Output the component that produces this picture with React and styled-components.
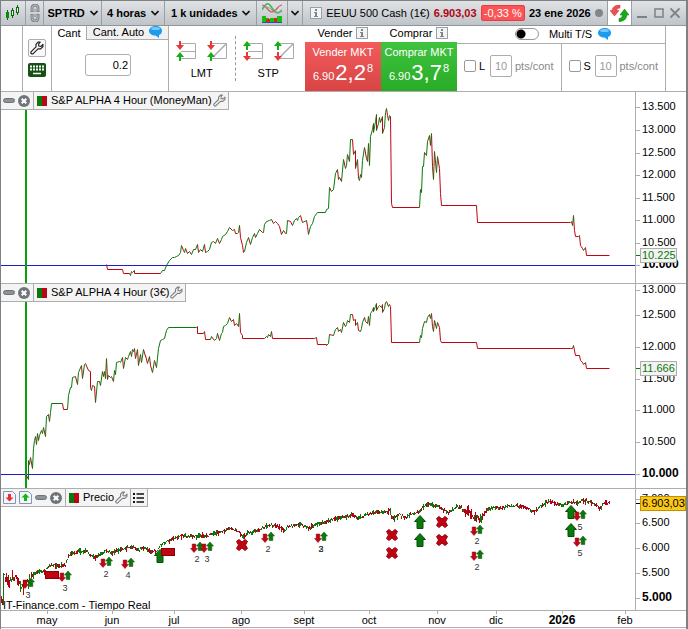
import React from 'react'
import styled, { createGlobalStyle } from 'styled-components'

const UP = '#0a780a'
const DOWN = '#c00412'
const LINE = '#adadad'

// Series are stored as flat x,y lists, three units per pixel.
const MONEYMAN = [
  318,522, 322,538, 368,538, 371,550, 388,550, 391,556, 394,543, 397,548, 402,540, 404,549, 480,549, 488,541, 494,540,
  500,526, 508,510, 516,501, 522,503, 530,500, 536,496, 541,486, 544,467, 549,480, 553,487, 556,475, 562,491, 568,485,
  573,493, 580,477, 586,478, 591,464, 595,488, 602,479, 606,483, 612,464, 616,486, 622,484, 628,478, 634,456, 640,455,
  647,461, 652,446, 657,459, 663,447, 668,438, 675,432, 682,425, 689,412, 696,421, 702,417, 706,430, 712,430, 716,428,
  718,406, 722,443, 726,465, 731,486, 734,484, 738,456, 744,443, 750,463, 756,443, 763,429, 767,443, 773,430, 779,419,
  786,428, 790,426, 794,402, 800,393, 808,392, 814,387, 820,400, 826,394, 832,401, 838,410, 844,432, 850,421, 855,431,
  859,429, 863,391, 870,395, 878,407, 884,391, 888,384, 892,392, 896,381, 902,377, 908,397, 918,390, 922,409, 925,432,
  930,410, 938,401, 944,379, 952,368, 975,367, 979,357, 985,354, 989,293, 994,303, 1001,297, 1006,250, 1012,238,
  1016,268, 1019,261, 1024,274, 1030,208, 1035,235, 1039,225, 1042,192, 1048,215, 1051,149, 1057,149, 1061,193,
  1065,182, 1067,235, 1071,208, 1076,265, 1079,270, 1081,252, 1084,262, 1088,210, 1093,172, 1098,206, 1102,213,
  1105,160, 1108,227, 1112,140, 1116,118, 1119,100, 1121,127, 1125,95, 1129,73, 1130,121, 1134,100, 1138,82, 1142,97,
  1146,80, 1148,130, 1152,112, 1156,67, 1159,55, 1163,75, 1166,92, 1169,77, 1172,80, 1174,340, 1178,352, 1258,352,
  1261,298, 1264,308, 1267,230, 1270,228, 1274,188, 1279,195, 1283,155, 1288,137, 1291,166, 1294,130, 1298,230,
  1300,268, 1304,185, 1308,247, 1312,200, 1317,235, 1321,310, 1325,346, 1430,346, 1432,397, 1710,397, 1715,395,
  1717,405, 1720,376, 1723,420, 1726,439, 1736,439, 1739,436, 1742,466, 1746,474, 1750,481, 1756,472, 1759,496, 1829,496,
]

const THREE_EURO = [
  80,585, 85,598, 86,540, 89,552, 91,532, 97,565, 100,505, 104,480, 107,470, 109,492, 112,461, 115,482, 119,465,
  124,452, 127,460, 130,443, 136,468, 139,410, 145,402, 148,424, 150,396, 155,370, 187,370, 190,388, 203,388, 206,345,
  210,322, 214,322, 217,293, 226,290, 232,312, 236,278, 243,257, 248,295, 253,252, 257,250, 264,270, 271,275, 272,322,
  275,332, 278,315, 283,318, 287,367, 292,305, 297,303, 301,315, 307,275, 311,290, 313,275, 316,295, 318,236, 322,297,
  325,285, 330,292, 335,288, 339,303, 343,270, 347,282, 350,248, 358,243, 362,248, 367,233, 371,265, 376,232, 382,238,
  386,228, 391,215, 393,230, 397,208, 401,213, 404,205, 407,235, 412,207, 415,257, 421,222, 425,247, 430,208, 435,230,
  437,225, 442,250, 447,228, 452,255, 457,277, 462,240, 470,262, 476,205, 482,182, 488,178, 494,175, 500,152, 505,142,
  590,142, 592,138, 593,160, 610,160, 613,153, 616,178, 630,178, 635,170, 643,180, 648,175, 653,160, 658,180, 663,160,
  667,158, 670,140, 676,135, 683,130, 689,112, 695,125, 699,118, 704,135, 710,130, 715,138, 718,100, 722,158, 726,165,
  728,175, 793,175, 798,168, 802,172, 806,163, 812,168, 814,155, 817,175, 942,175, 948,172, 952,193, 978,193, 980,196,
  985,190, 989,163, 1000,165, 1005,148, 1011,142, 1016,153, 1021,148, 1025,157, 1030,127, 1035,140, 1039,133, 1042,122,
  1048,128, 1051,103, 1057,103, 1061,122, 1065,117, 1067,137, 1071,128, 1076,152, 1080,153, 1085,145, 1088,127,
  1093,113, 1097,125, 1102,130, 1105,108, 1108,136, 1112,100, 1116,92, 1119,82, 1121,95, 1125,80, 1129,70, 1130,92,
  1135,80, 1139,77, 1143,82, 1146,73, 1148,97, 1153,85, 1157,67, 1160,65, 1165,78, 1169,73, 1172,78, 1174,187,
  1258,187, 1261,167, 1264,172, 1267,145, 1274,125, 1279,127, 1283,113, 1288,103, 1291,115, 1294,100, 1298,140,
  1300,153, 1304,122, 1308,145, 1312,128, 1317,142, 1322,180, 1325,187, 1430,187, 1432,205, 1710,205, 1717,205,
  1720,196, 1725,225, 1738,227, 1742,240, 1747,248, 1751,252, 1755,248, 1759,265, 1829,265,
]

const PRICE = [
  12,275, 22,285, 28,290, 35,275, 45,275, 55,295, 65,300, 75,300, 85,290, 100,268, 110,262, 120,258, 130,262, 150,240,
  165,243, 185,240, 195,240, 205,212, 215,205, 225,205, 235,198, 245,203, 255,195, 265,205, 275,212, 285,218, 295,210,
  305,205, 315,198, 325,200, 335,205, 345,198, 360,195, 380,188, 400,186, 415,195, 430,190, 445,198, 460,198, 470,200,
  478,182, 490,175, 505,168, 515,162, 530,160, 545,152, 560,155, 575,153, 590,155, 605,152, 615,155, 630,148, 650,143,
  660,142, 685,130, 710,135, 720,145, 728,155, 740,145, 760,140, 780,133, 795,125, 810,120, 830,123, 845,133, 855,135,
  860,125, 880,122, 900,118, 915,125, 925,130, 940,122, 960,115, 980,110, 1000,100, 1020,100, 1035,95, 1055,90,
  1070,100, 1090,92, 1115,83, 1140,80, 1168,80, 1175,100, 1185,92, 1200,90, 1212,100, 1230,88, 1250,83, 1265,70,
  1280,58, 1300,62, 1315,65, 1330,75, 1345,85, 1355,74, 1365,68, 1380,65, 1390,80, 1400,80, 1415,92, 1430,95, 1440,105,
  1450,90, 1460,72, 1480,68, 1500,70, 1520,65, 1540,62, 1560,65, 1580,68, 1600,80, 1620,65, 1640,52, 1655,52, 1670,58,
  1690,60, 1710,52, 1730,52, 1750,46, 1770,50, 1790,65, 1800,70, 1810,55, 1828,55,
]

const MARKERS = [
  ['pair', 85, 293, ['3'], 328], ['box', 155, 271], ['pair', 196, 274, ['3'], 310], ['pair', 319, 232, ['2'], 268],
  ['pair', 385, 235, ['4'], 270], ['buy', 481, 214], ['box', 505, 202], ['pair', 592, 187, ['2'], 222],
  ['pair', 622, 187, ['3'], 222], ['cross', 727, 181], ['pair', 805, 157, ['2'], 193], ['pair', 962, 157, ['2', '3'], 193],
  ['cross', 1177, 149], ['cross', 1177, 203], ['buy', 1261, 112], ['buy', 1261, 166], ['cross', 1325, 111],
  ['cross', 1325, 166], ['pair', 1432, 134, ['2'], 168], ['pair', 1432, 211, ['2'], 246], ['buy', 1714, 82],
  ['buy', 1714, 136], ['pair', 1741, 91, ['5'], 127], ['pair', 1741, 169, ['5'], 205],
]

const MONTHS = [
  ['may', 46], ['jun', 111], ['jul', 173], ['ago', 240], ['sept', 303], ['oct', 368], ['nov', 436], ['dic', 495],
  ['2026', 561, true], ['feb', 624],
]

const PLOT_WIDTH = 634
const pct = (x) => `${(x / PLOT_WIDTH) * 100}%`
const snap = (v) => Math.floor(v / 3) + 0.5

// Splits a series into a rising and a falling path; flat runs keep the last colour.
function splitSeries(data, top) {
  let up = ''
  let down = ''
  let rising = false
  for (let i = 2; i < data.length; i += 2) {
    const x1 = snap(data[i - 2]) - 1
    const y1 = snap(data[i - 1]) - top
    const x2 = snap(data[i]) - 1
    const y2 = snap(data[i + 1]) - top
    if (y2 !== y1) rising = y2 < y1
    const part = `M${x1} ${y1}L${x2} ${y2}`
    if (rising) up += part
    else down += part
  }
  return { up, down }
}

function priceBars(data) {
  let up = 'M2.5 84V116'
  let down = 'M0.5 107V114M1.5 110V116'
  let seed = 7
  const rand = () => {
    seed = (seed * 16807) % 2147483647
    return seed / 2147483647
  }
  let k = 0
  for (let x = 4; x < 610; x++) {
    while (k + 3 < data.length - 2 && data[k + 2] < x * 3) k += 2
    const t = (x * 3 - data[k]) / (data[k + 2] - data[k])
    const y = (data[k + 1] + t * (data[k + 3] - data[k + 1])) / 3 - 4
    const wild = x < 32 ? 3 : (x > 387 && x < 405) || (x > 455 && x < 486) ? 2 : 1
    const h = 1 + Math.floor(rand() * rand() * 5 * wild + rand() * 2)
    const y1 = Math.round(y - h / 2 + (rand() - 0.5) * wild * 2)
    const part = `M${x - 0.5} ${y1}v${h}`
    const slope = data[k + 3] - data[k + 1]
    if (rand() < (slope < 0 ? 0.65 : 0.35)) up += part
    else down += part
  }
  return { up, down }
}

function Wrench({ size = 14, color = '#7c8084' }) {
  return (
    <svg width={size} height={size} viewBox="0 0 14 14" fill="none" stroke={color} strokeWidth="1.2" strokeLinejoin="round">
      <path d="M8 1.2 6 3.4v2.5L1.2 10.6q-.8 1 .1 1.9t1.9.1L8 7.9h2.6l2.3-2.2V3.4L11 5.3 8.7 5V2.9L10.2 1.2z" />
    </svg>
  )
}

function InfoIcon() {
  return (
    <svg width="12" height="12" viewBox="0 0 12 12">
      <rect x="0.5" y="0.5" width="11" height="11" fill="#f4f4f4" stroke="#9aa0a4" />
      <path d="M5 2h2v2H5zM4 5h3v4h1v1H4V9h1V6H4z" fill="#80868c" />
    </svg>
  )
}

function Bubble() {
  return (
    <svg width="13" height="12" viewBox="0 0 13 12">
      <path d="M6.5 0C10.300 0 13 2 13 4.800S11.500 8.600 10 9V12L6.500 9.500C2.800 9.300 0 7.600 0 4.900S2.800 0 6.500 0z" fill="#1c9cf0" />
      <ellipse cx="6.5" cy="2.5" rx="4.5" ry="1.6" fill="#7cc8fa" />
    </svg>
  )
}

function Chevron() {
  return (
    <svg width="8" height="6" viewBox="0 0 8 6" fill="none" stroke="#111" strokeWidth="1.6">
      <path d="M.5 1 4 4.500 7.500 1" />
    </svg>
  )
}

function CandlesIcon() {
  return (
    <svg width="14" height="16" viewBox="0 0 14 16">
      <path d="M1.5 5v10M6.5 3v10M11.5 0v10" stroke="#0a6a0a" />
      <rect x="0" y="7" width="3" height="6" fill="#0a8a0a" />
      <rect x="5.5" y="5.5" width="2" height="5" fill="#dfe" stroke="#0a6a0a" />
      <rect x="10.5" y="2.5" width="2" height="5" fill="#dfe" stroke="#0a6a0a" />
    </svg>
  )
}

function LinkIcon() {
  return (
    <svg width="10" height="18" viewBox="0 0 10 18" fill="none">
      <path d="M2 8V4a3 3 0 0 1 6 0v4M2 10v4a3 3 0 0 0 6 0v-4" stroke="#7f858a" strokeWidth="3" />
      <path d="M2 7V4a3 3 0 0 1 6 0v3M2 11v3a3 3 0 0 0 6 0v-3" stroke="#b4b9bd" />
      <path d="M5 5v3M5 10v3" stroke="#7f858a" />
    </svg>
  )
}

function IndicatorIcon() {
  return (
    <svg width="20" height="20" viewBox="0 0 20 20" fill="none">
      <path d="M0 7C5-2 7 0 10 5s6 7 10 2" stroke="#3cb84c" strokeWidth="1.5" />
      <path d="M0 2c4 0 6 7 10 7s6-7 10-7" stroke="#d05858" strokeWidth="1.2" />
      <path d="M0 5c4-2 6-1 10 2s7 3 10 1" stroke="#8a9a90" />
      <path d="M0 19V13h4v2h3v4zM8 19v-4h4v4zM15 19v-6h5v6z" fill="#12c012" />
      <path d="M4 19v-3h4v3zM12 19v-4h3v4z" fill="#e02020" />
      <path d="M0 19.5h20" stroke="#2050c0" />
    </svg>
  )
}

function RefreshIcon() {
  return (
    <svg width="19" height="17" viewBox="0 0 19 17">
      <path d="M10 0C5 0 2.500 2 2.200 5.500H0L4.500 11 9 5.500H6.500C6.800 4 8 3 10 3z" fill="#ee5050" stroke="#c83030" strokeWidth="0.5" />
      <path d="M9 16.500c5 0 7.500-2.500 7.800-6.500H19L14.500 4 10 10h2.500c-.3 2-1.500 3.300-3.500 3.500z" fill="#18a818" stroke="#0a780a" strokeWidth="0.5" />
    </svg>
  )
}

// Arrow pair in front of either a level line or a slanted one.
function OrderIcon({ slanted, upFirst }) {
  const head = (y, up, color) =>
    up ? <path d={`M0 ${y + 5}l4-5 4 5H5v4H3v-4z`} fill={color} /> : <path d={`M0 ${y + 4}l4 5 4-5H5v-4H3v4z`} fill={color} />
  return (
    <svg width="20" height="20" viewBox="0 0 20 20" fill="none">
      <path d="M5 2.5H19.5V17.5H5" stroke="#aaa" />
      <path d={slanted ? 'M6 16 19 3' : 'M5 10.5H19'} stroke="#aaa" strokeWidth={slanted ? 1.5 : 1} />
      {upFirst ? head(0, true, '#14b014') : head(0, false, '#e83838')}
      {upFirst ? head(11, false, '#e83838') : head(11, true, '#14b014')}
    </svg>
  )
}

function KeyboardIcon() {
  return (
    <svg width="18" height="14" viewBox="0 0 18 14">
      <rect width="18" height="14" rx="2" fill="#145214" />
      <path d="M2 3.5h14M2 6.5h14" stroke="#fff" strokeWidth="2" strokeDasharray="2 1" />
      <path d="M5 10.5h8" stroke="#fff" strokeWidth="1.5" />
    </svg>
  )
}

function MinusIcon() {
  return (
    <svg width="12" height="5" viewBox="0 0 12 5">
      <rect x="0.5" y="0.5" width="11" height="4" rx="2" fill="#8d9296" stroke="#6c7276" />
    </svg>
  )
}

function CloseIcon() {
  return (
    <svg width="12" height="12" viewBox="0 0 12 12">
      <circle cx="6" cy="6" r="6" fill="#6f7579" />
      <path d="M3.7 3.7l4.6 4.6M8.3 3.7 3.7 8.3" stroke="#fff" strokeWidth="2" />
    </svg>
  )
}

function PaneArrowIcon({ up }) {
  return (
    <svg width="13" height="13" viewBox="0 0 13 13">
      <path d="M.5.5h9l3 3v9H.5z" fill="#f2f6fa" stroke="#8296ae" />
      <path d={up ? 'M6.5 2.5l4 4H8V10H5V6.5H2.5z' : 'M6.5 10.5l4-4H8V3H5v3.5H2.5z'} fill={up ? '#12b812' : '#e83030'} />
    </svg>
  )
}

function ListIcon() {
  return (
    <svg width="11" height="10" viewBox="0 0 11 10" stroke="#111" strokeWidth="1.5">
      <path d="M3.5 1H11M3.5 5H11M3.5 9H11" />
      <path d="M0 1h2M0 5h2M0 9h2" strokeWidth="2" />
    </svg>
  )
}

function SwatchIcon() {
  return (
    <svg width="10" height="10" viewBox="0 0 10 10">
      <path d="M0 0h5v10H0z" fill={UP} />
      <path d="M5 0h5v10H5z" fill="#b80818" />
    </svg>
  )
}

function Marker({ kind, x, y, labels = [], labelY = 0 }) {
  const cx = pct(Math.round(x / 3) - 1)
  const cy = Math.round(y / 3) - 4
  return (
    <svg x={cx} y={cy} overflow="visible">
      {kind === 'box' && <rect x="-6.5" y="-3.5" width="13" height="7" fill={DOWN} stroke="#8c0008" />}
      {kind === 'buy' && <path d="M0-6.5l5.5 6H3V6.5H-3V-.5H-5.5z" fill="#0a780a" stroke="#065006" />}
      {kind === 'cross' && (
        <path
          d="M-3-5.5 0-3 3-5.5 5.5-3.5 3.500 0 5.500 3.500 3 5.500 0 3-3 5.500-5.500 3.500-3.500 0-5.500-3.500z"
          fill={DOWN} stroke="#980410" strokeLinejoin="round"
        />
      )}
      {kind === 'pair' && (
        <g strokeWidth="0.5">
          <path d="M-3 5.5l3.5-4H-1.2V-3H-4.8V1.5H-6.5z" fill={DOWN} stroke="#8c0008" />
          <path d="M3-5l3.5 4H4.8V3.5H1.2V-1H-.5z" fill="#0a780a" stroke="#065006" />
        </g>
      )}
      {labels.map((text) => (
        <MarkerText key={text} y={Math.round((labelY - y) / 3) + 3}>{text}</MarkerText>
      ))}
    </svg>
  )
}

function LinePlot({ data, top, height, baseline }) {
  const { up, down } = splitSeries(data, top)
  return (
    <Plot $height={height} viewBox={`0 0 ${PLOT_WIDTH} ${height}`} preserveAspectRatio="none">
      <path d={`M0 ${baseline}.5H${PLOT_WIDTH}`} stroke="#1c1cd0" />
      <path d={`M25 0V${height}`} stroke="#08a008" strokeWidth="2" />
      <path d={down} stroke={DOWN} />
      <path d={up} stroke={UP} />
    </Plot>
  )
}

function PricePlot() {
  const { up, down } = priceBars(PRICE)
  return (
    <Plot $height={121}>
      <svg width="100%" height="121" viewBox={`0 0 ${PLOT_WIDTH} 121`} preserveAspectRatio="none">
        <path d={down} stroke="#b00414" />
        <path d={up} stroke={UP} />
      </svg>
      {MARKERS.map(([kind, x, y, labels, labelY]) => (
        <Marker key={`${x}-${y}`} kind={kind} x={x} y={y} labels={labels} labelY={labelY} />
      ))}
      <AxisText x="2" y="120">IT-Finance.com - Tiempo Real</AxisText>
    </Plot>
  )
}

function ValueAxis({ height, ticks, last }) {
  return (
    <Axis height={height}>
      <path d={`M.5 0V${height}`} stroke={LINE} />
      {ticks.map(([label, y, bold]) => (
        <g key={label}>
          <path d={`M1 ${y}.5h4`} stroke={LINE} />
          <AxisText x="7" y={y + 3} $bold={bold}>{label}</AxisText>
        </g>
      ))}
      <path d={`M1 ${last.y}.5h4`} stroke={last.yellow ? '#000' : UP} />
      <rect
        x="5.5" y={last.y - 6.5} width={last.yellow ? 45 : 36} height="14"
        fill={last.yellow ? '#fcc818' : '#f3f3f3'} stroke={last.yellow ? '#c09000' : LINE}
      />
      <AxisText x="7" y={last.y + 4} $color={last.yellow ? '#000' : UP}>{last.label}</AxisText>
    </Axis>
  )
}

function ChartHeader({ title }) {
  return (
    <Header>
      <HeaderGroup>
        <IconButton aria-label="Minimizar"><MinusIcon /></IconButton>
        <IconButton aria-label="Cerrar"><CloseIcon /></IconButton>
      </HeaderGroup>
      <TitleGroup>
        <SwatchIcon />
        <span>{title}</span>
        <IconButton aria-label="Configurar"><Wrench size={13} /></IconButton>
      </TitleGroup>
    </Header>
  )
}

function ToolSelect({ label, value, width }) {
  return (
    <Cell $width={width}>
      <Select aria-label={label}><option>{value}</option></Select>
      <Chevron />
    </Cell>
  )
}

function Quote({ title, side, price }) {
  return (
    <QuoteColumn>
      <QuoteTitle>{title} <InfoIcon /></QuoteTitle>
      <QuoteButton $side={side}>
        <span>{title} MKT</span>
        <Price>6.90<big>{price}</big><sup>8</sup></Price>
      </QuoteButton>
    </QuoteColumn>
  )
}

function StopField({ letter }) {
  return (
    <StopCell>
      <label><CheckBox type="checkbox" />{letter}</label>
      <label><StopInput defaultValue="10" disabled />pts/cont</label>
    </StopCell>
  )
}

export default function App() {
  return (
    <>
      <GlobalStyle />
      <Window>
        <TitleBar>
          <Cell $width={25}><CandlesIcon /></Cell>
          <Cell $width={18}><LinkIcon /></Cell>
          <ToolSelect label="Instrumento" value="SPTRD" width={58} />
          <ToolSelect label="Periodo" value="4 horas" width={63} />
          <ToolSelect label="Unidades" value="1 k unidades" width={92} />
          <Cell $width={31}><IconButton aria-label="Indicadores"><IndicatorIcon /></IconButton></Cell>
          <Cell $width={15}><IconButton aria-label="Más indicadores"><Chevron /></IconButton></Cell>
          <Instrument>
            <InfoIcon />
            <span>EEUU 500 Cash (1€)</span>
            <LastPrice>6.903,03</LastPrice>
            <Change>-0,33 %</Change>
            <b>23 ene 2026</b>
            <StatusDot />
          </Instrument>
          <Cell $width={24} $white><IconButton aria-label="Actualizar"><RefreshIcon /></IconButton></Cell>
          <WindowButtons>
            <IconButton aria-label="Minimizar ventana">
              <svg width="10" height="12" viewBox="0 0 10 12"><path d="M0 10h10" stroke="#7c8185" strokeWidth="2" /></svg>
            </IconButton>
            <IconButton aria-label="Maximizar ventana">
              <svg width="10" height="12" viewBox="0 0 10 12"><path d="M1 2h8v8H1z" fill="none" stroke="#7c8185" strokeWidth="1.5" /></svg>
            </IconButton>
            <IconButton aria-label="Cerrar ventana">
              <svg width="10" height="12" viewBox="0 0 10 12"><path d="M.5 1.5l9 9M9.5 1.5l-9 9" stroke="#7c8185" strokeWidth="1.8" /></svg>
            </IconButton>
          </WindowButtons>
        </TitleBar>

        <OrderBar>
          <Spacer $width={22} />
          <Tools>
            <WrenchButton aria-label="Configurar órdenes"><Wrench color="#222" /></WrenchButton>
            <IconButton aria-label="Teclado"><KeyboardIcon /></IconButton>
          </Tools>
          <Quantity>
            <Tabs>
              <Tab $active>Cant</Tab>
              <Tab>Cant. Auto <Bubble /></Tab>
            </Tabs>
            <QuantityInput aria-label="Cantidad" defaultValue="0.2" />
          </Quantity>
          <OrderTypes>
            <OrderType>
              <div>
                <IconButton aria-label="LMT horizontal"><OrderIcon /></IconButton>
                <IconButton aria-label="LMT oblicua"><OrderIcon slanted /></IconButton>
              </div>
              LMT
            </OrderType>
            <OrderType>
              <div>
                <IconButton aria-label="STP horizontal"><OrderIcon upFirst /></IconButton>
                <IconButton aria-label="STP oblicua"><OrderIcon upFirst slanted /></IconButton>
              </div>
              STP
            </OrderType>
          </OrderTypes>
          <Quote title="Vender" side="sell" price="2,2" />
          <Quote title="Comprar" side="buy" price="3,7" />
          <Stops>
            <StopsTop>
              <Switch><input type="checkbox" role="switch" />Multi T/S</Switch>
              <Bubble />
            </StopsTop>
            <StopsRow>
              <StopField letter="L" />
              <StopField letter="S" />
            </StopsRow>
          </Stops>
          <Spacer $width={20} />
        </OrderBar>

        <Panel>
          <ChartHeader title="S&P ALPHA 4 Hour (MoneyMan)" />
          <LinePlot data={MONEYMAN} top={2} height={191} baseline={173} />
          <ValueAxis
            height={191}
            ticks={[
              ['13.500', 15], ['13.000', 38], ['12.500', 61], ['12.000', 83], ['11.500', 106],
              ['11.000', 128], ['10.500', 151], ['10.000', 173, true],
            ]}
            last={{ label: '10.225', y: 163 }}
          />
        </Panel>
        <Panel>
          <ChartHeader title="S&P ALPHA 4 Hour (3€)" />
          <LinePlot data={THREE_EURO} top={4} height={204} baseline={190} />
          <ValueAxis
            height={204}
            ticks={[
              ['13.000', 6], ['12.500', 31], ['12.000', 63], ['11.500', 95], ['11.000', 126],
              ['10.500', 158], ['10.000', 190, true],
            ]}
            last={{ label: '11.666', y: 84 }}
          />
        </Panel>
        <Panel>
          <Header>
            <HeaderGroup>
              <IconButton aria-label="Bajar panel"><PaneArrowIcon /></IconButton>
              <IconButton aria-label="Subir panel"><PaneArrowIcon up /></IconButton>
              <IconButton aria-label="Minimizar"><MinusIcon /></IconButton>
              <IconButton aria-label="Cerrar"><CloseIcon /></IconButton>
            </HeaderGroup>
            <TitleGroup>
              <SwatchIcon />
              <span>Precio</span>
              <IconButton aria-label="Configurar"><Wrench size={13} /></IconButton>
            </TitleGroup>
            <HeaderGroup>
              <IconButton aria-label="Lista"><ListIcon /></IconButton>
            </HeaderGroup>
          </Header>
          <PricePlot />
          <ValueAxis
            height={121}
            ticks={[['7.000', 10], ['6.500', 34], ['6.000', 59], ['5.500', 84], ['5.000', 109, true]]}
            last={{ label: '6.903,03', y: 14, yellow: true }}
          />
        </Panel>
        <TimeRow>
          <TimeAxis>
            {MONTHS.map(([label, x, bold]) => (
              <svg key={label} x={pct(x)} overflow="visible">
                <path d="M.5 0v3" stroke={LINE} />
                <AxisText y="13" $bold={bold} $middle>{label}</AxisText>
              </svg>
            ))}
          </TimeAxis>
        </TimeRow>
      </Window>
    </>
  )
}

const GlobalStyle = createGlobalStyle`
  * {
    box-sizing: border-box;
  }

  body {
    margin: 0;
    background: #fff;
    color: #000;
    font: 11px/14px "Liberation Sans", Arial, sans-serif;
  }

  button, input, select {
    font: inherit;
    color: inherit;
  }

  svg {
    display: block;
    flex-shrink: 0;
  }
`

const Window = styled.div`
  min-width: 688px;
  min-height: 100vh;
  background: #fff;
  border: 1px solid #808080;
  border-right-width: 2px;
  border-bottom: 0;
`

const TitleBar = styled.header`
  display: flex;
  height: 25px;
  background: linear-gradient(#e0e3e6, #bfc4c9);
  border-bottom: 1px solid #90959a;
`

const Cell = styled.div`
  display: flex;
  align-items: center;
  justify-content: center;
  gap: 4px;
  flex: none;
  width: ${props => props.$width}px;
  border-right: 1px solid #9a9fa3;
  background: ${props => (props.$white ? '#fff' : 'none')};
`

const Select = styled.select`
  appearance: none;
  border: 0;
  padding: 0;
  background: none;
  font-weight: bold;
  cursor: pointer;
`

const IconButton = styled.button`
  display: flex;
  align-items: center;
  padding: 0;
  border: 0;
  background: none;
  cursor: pointer;
`

const Instrument = styled.div`
  flex: 1;
  display: flex;
  align-items: center;
  justify-content: space-between;
  padding: 0 4px 0 7px;
  border-right: 1px solid #9a9fa3;
  white-space: nowrap;
`

const LastPrice = styled.b`
  color: #b00412;
`

const Change = styled.span`
  padding: 0 2px;
  color: #fff;
  background: #fa5456;
  border: 1px solid #e83c40;
  border-radius: 2px;
`

const StatusDot = styled.i`
  width: 8px;
  height: 8px;
  border-radius: 50%;
  background: #858585;
`

const WindowButtons = styled.div`
  display: flex;
  align-items: center;
  justify-content: space-between;
  width: 54px;
  padding: 0 6px 0 5px;
`

const OrderBar = styled.section`
  display: flex;
  height: 66px;
  border-bottom: 1px solid ${LINE};
`

const Spacer = styled.div`
  flex: none;
  width: ${props => props.$width}px;
  border-right: ${props => (props.$width > 20 ? `1px solid ${LINE}` : 0)};
`

const Tools = styled.div`
  display: flex;
  flex-direction: column;
  align-items: center;
  gap: 6px;
  width: 29px;
  padding-top: 13px;
  border-right: 1px solid ${LINE};
`

const WrenchButton = styled(IconButton)`
  justify-content: center;
  width: 18px;
  height: 18px;
  border: 1px solid ${LINE};
  border-radius: 2px;
  background: #f8f8f8;
`

const Quantity = styled.div`
  flex: none;
  width: 117px;
  border-right: 1px solid ${LINE};
`

const Tabs = styled.div`
  display: flex;
  height: 14px;
`

const Tab = styled.button`
  display: flex;
  align-items: center;
  justify-content: center;
  gap: 5px;
  flex: ${props => (props.$active ? '0 0 35px' : 1)};
  padding: 0 0 1px;
  border: solid ${LINE};
  border-width: ${props => (props.$active ? '0 1px 0 0' : '0 0 1px')};
  background: ${props => (props.$active ? '#fff' : '#f1f1f1')};
`

const QuantityInput = styled.input`
  display: block;
  width: 46px;
  height: 22px;
  margin: 14px 0 0 33px;
  padding: 0 2px;
  border: 1px solid ${LINE};
  border-radius: 3px;
  text-align: right;
`

const OrderTypes = styled.div`
  flex: 1;
  display: flex;
  padding: 10px 4px 10px 0;
`

const OrderType = styled.div`
  flex: 1;
  display: flex;
  flex-direction: column;
  align-items: center;
  gap: 5px;
  padding-top: 5px;

  & > div {
    display: flex;
    gap: 11px;
  }

  & + & {
    border-left: 1px dashed #999;
  }
`

const QuoteColumn = styled.div`
  display: flex;
  flex-direction: column;
  width: 76px;
`

const QuoteTitle = styled.div`
  display: flex;
  align-items: center;
  justify-content: center;
  gap: 4px;
  height: 16px;
  padding-bottom: 2px;
`

const QuoteButton = styled.button`
  flex: 1;
  display: flex;
  flex-direction: column;
  align-items: center;
  padding: 3px 0 0;
  border: 0;
  color: #fff;
  white-space: nowrap;
  background: ${props => (props.$side === 'sell'
    ? 'linear-gradient(#f25c5c, #d84444)'
    : 'linear-gradient(#40c440, #28ac28)')};
`

const Price = styled.span`
  line-height: 28px;

  big {
    padding: 0 1px;
    font-size: 22px;
  }

  sup {
    font-size: 11px;
    line-height: 0;
    vertical-align: 8px;
  }
`

const Stops = styled.div`
  width: 209px;
  display: flex;
  flex-direction: column;
  border-right: 1px solid ${LINE};
`

const StopsTop = styled.div`
  display: flex;
  align-items: center;
  justify-content: center;
  gap: 6px;
  height: 18px;
  padding: 0 0 2px 4px;
  border-bottom: 1px solid ${LINE};
`

const Switch = styled.label`
  display: flex;
  align-items: center;
  gap: 10px;

  input {
    appearance: none;
    width: 24px;
    height: 12px;
    margin: 0;
    border: 1px solid #999;
    border-radius: 6px;
    background: radial-gradient(circle at 5px 5px, #000 4px, #fff 5px);
  }
`

const StopsRow = styled.div`
  flex: 1;
  display: flex;
`

const StopCell = styled.div`
  flex: 1;
  display: flex;
  align-items: center;
  gap: 4px;
  padding: 0 0 4px 7px;
  color: #888;

  & + & {
    border-left: 1px solid ${LINE};
  }

  label {
    display: flex;
    align-items: center;
    gap: 3px;
  }

  label:first-child {
    width: 22px;
    color: #000;
  }
`

const CheckBox = styled.input`
  appearance: none;
  flex: none;
  width: 12px;
  height: 12px;
  margin: 0;
  border: 1px solid #999;
  border-radius: 2px;
`

const StopInput = styled.input`
  width: 22px;
  height: 22px;
  padding: 0;
  border: 1px solid ${LINE};
  border-radius: 2px;
  background: #fff;
  color: #999;
  text-align: center;
`

const Panel = styled.section`
  position: relative;
  display: flex;
  border-bottom: 1px solid ${LINE};
`

const Header = styled.div`
  position: absolute;
  top: 0;
  left: 0;
  display: flex;
  height: 18px;
  background: #f4f4f4;
  border-bottom: 1px solid ${LINE};
`

const HeaderGroup = styled.div`
  display: flex;
  align-items: center;
  gap: 3px;
  padding: 0 3px 0 2px;
  border-right: 1px solid ${LINE};
`

const TitleGroup = styled(HeaderGroup)`
  gap: 1px;
  padding: 0 2px 0 3px;

  span {
    padding: 0 0 1px 3px;
  }
`

const Plot = styled.svg`
  flex: 1;
  min-width: 0;
  height: ${props => props.$height}px;
  fill: none;
`

const Axis = styled.svg`
  width: 51px;
`

const AxisText = styled.text`
  font-size: ${props => (props.$bold ? 12 : 11)}px;
  font-weight: ${props => (props.$bold ? 'bold' : 'normal')};
  fill: ${props => props.$color || '#000'};
  text-anchor: ${props => (props.$middle ? 'middle' : 'start')};
`

const MarkerText = styled.text`
  font-size: 9px;
  fill: #333;
  text-anchor: middle;
`

const TimeRow = styled.div`
  display: flex;
  height: 17px;
  padding-right: 51px;
  border-bottom: 1px solid ${LINE};
`

const TimeAxis = styled.svg`
  flex: 1;
  height: 16px;
  overflow: visible;
`
